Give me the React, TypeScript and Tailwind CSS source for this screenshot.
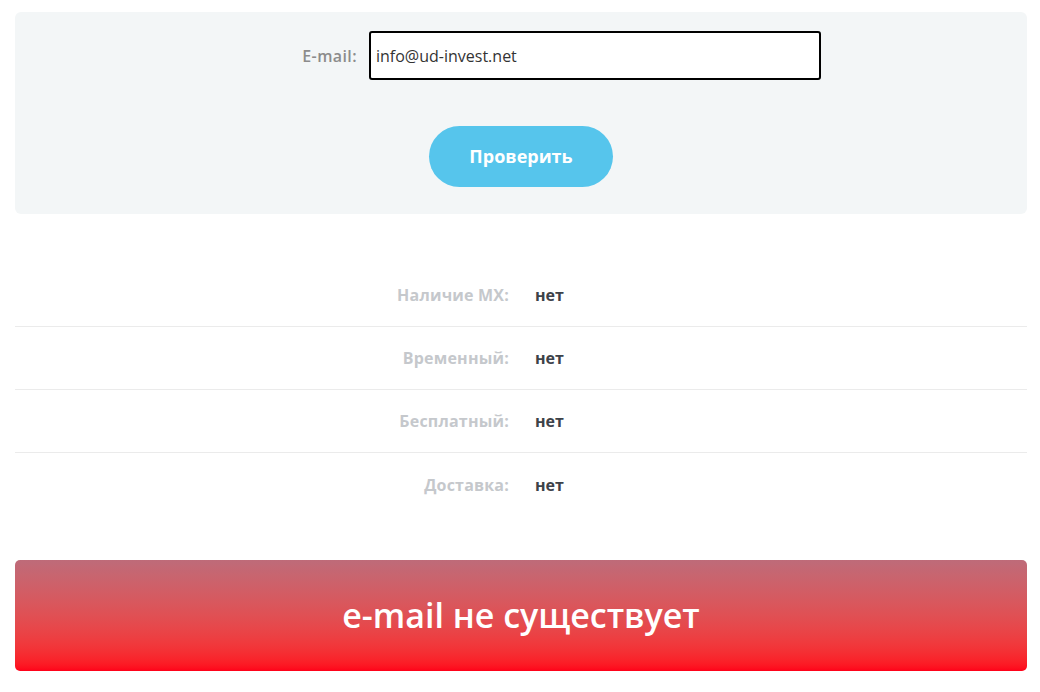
import React from 'react';

const rows = [
  { label: 'Наличие MX:', value: 'нет' },
  { label: 'Временный:', value: 'нет' },
  { label: 'Бесплатный:', value: 'нет' },
  { label: 'Доставка:', value: 'нет' },
];

export default function App() {
  return (
    <div className="min-h-screen bg-white pl-[15px] pr-[13px] pt-[12px] font-['Open_Sans',sans-serif]">
      {/* Check form */}
      <div className="rounded-[6px] bg-[#f3f6f7] pt-[19px] pb-[27px]">
        <div className="flex items-center">
          <label className="w-[342px] text-right text-[16px] font-semibold tracking-[0.4px] text-[#8c8c8c]">E-mail:</label>
          <input
            defaultValue="info@ud-invest.net"
            className="ml-[12px] h-[49px] w-[452px] rounded-[3px] border-2 border-black bg-white px-[5px] text-[16px] text-[#333] outline-none"
          />
        </div>
        <div className="mt-[46px] flex justify-center">
          <button className="h-[61px] w-[184px] rounded-full bg-[#56c5ec] text-[18px] font-bold text-white">
            Проверить
          </button>
        </div>
      </div>

      {/* Results */}
      <div className="mt-[50px]">
        {rows.map((r, i) => (
          <div
            key={r.label}
            className={`flex h-[63px] items-center ${i < rows.length - 1 ? 'border-b border-[#ebebeb]' : ''}`}
          >
            <div className="w-[494px] text-right text-[16px] font-bold tracking-[0.2px] text-[#c5c8cc]">{r.label}</div>
            <div className="ml-[26px] text-[16px] font-bold text-[#3d4249]">{r.value}</div>
          </div>
        ))}
      </div>

      {/* Verdict */}
      <div className="mt-[44px] flex h-[111px] items-center justify-center rounded-[5px] bg-gradient-to-b from-[#be6b79] to-[#ff0019]">
        <span className="text-[34px] font-semibold text-white">e-mail не существует</span>
      </div>
    </div>
  );
}
